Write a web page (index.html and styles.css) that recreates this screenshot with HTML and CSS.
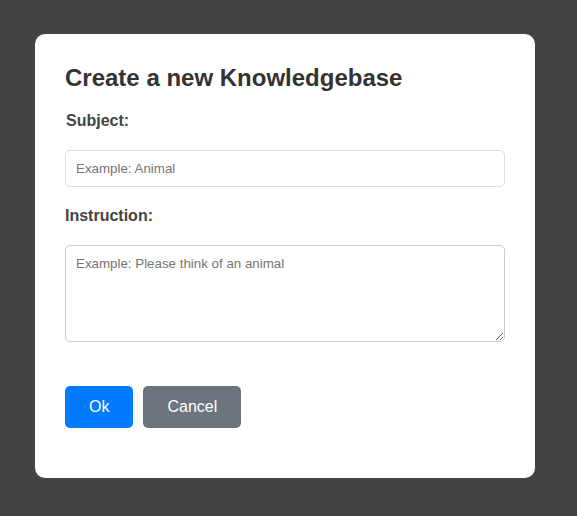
FILE: index.html
```html
<!DOCTYPE html>
<html>
<head>
<meta charset="utf-8">
<link rel="stylesheet" href="styles.css">
</head>
<body>
<div class="modal">
  <h2 class="title">Create a new Knowledgebase</h2>
  <label class="label" for="subject">Subject:</label>
  <input class="field" id="subject" type="text" placeholder="Example: Animal">
  <label class="label" for="instruction">Instruction:</label>
  <textarea class="area" id="instruction" placeholder="Example: Please think of an animal"></textarea>
  <div class="actions">
    <button class="btn btn-ok">Ok</button>
    <button class="btn btn-cancel">Cancel</button>
  </div>
</div>
</body>
</html>
```
FILE: styles.css
```css
html, body {
  margin: 0;
  padding: 0;
  background: #434343;
  height: 100%;
}
body {
  font-family: "Liberation Sans", Arial, sans-serif;
  padding-top: 34px;
  box-sizing: border-box;
}
.modal {
  margin-left: 35px;
  width: 500px;
  box-sizing: border-box;
  background: #fff;
  border-radius: 10px;
  padding: 30px 30px 50px;
  display: flex;
  flex-direction: column;
}
.title {
  margin: 0;
  font-size: 24px;
  line-height: 28px;
  font-weight: bold;
  color: #333;
}
.label {
  display: block;
  margin-top: 20px;
  font-size: 16px;
  line-height: 18px;
  font-weight: bold;
  color: #444;
}
.label:first-of-type {
  margin-left: 1px;
}
.field, .area {
  font-family: "Liberation Sans", Arial, sans-serif;
  font-size: 13.333px;
  margin-top: 20px;
  width: 100%;
  box-sizing: border-box;
  padding: 10px;
  border-radius: 5px;
  color: #333;
  outline: none;
}
.field {
  height: 37px;
  border: 1px solid #ddd;
}
.area {
  height: 97px;
  border: 1px solid #ccc;
  resize: vertical;
  display: block;
}
.field::placeholder, .area::placeholder {
  color: #757575;
}
.actions {
  display: flex;
  gap: 10px;
  margin-top: 44px;
}
.btn {
  font-family: "Liberation Sans", Arial, sans-serif;
  font-size: 16px;
  line-height: 18px;
  padding: 12px 24px;
  border: none;
  border-radius: 5px;
  color: #fff;
  cursor: pointer;
}
.btn-ok {
  background: #007bff;
}
.btn-cancel {
  background: #6c757d;
}
```
